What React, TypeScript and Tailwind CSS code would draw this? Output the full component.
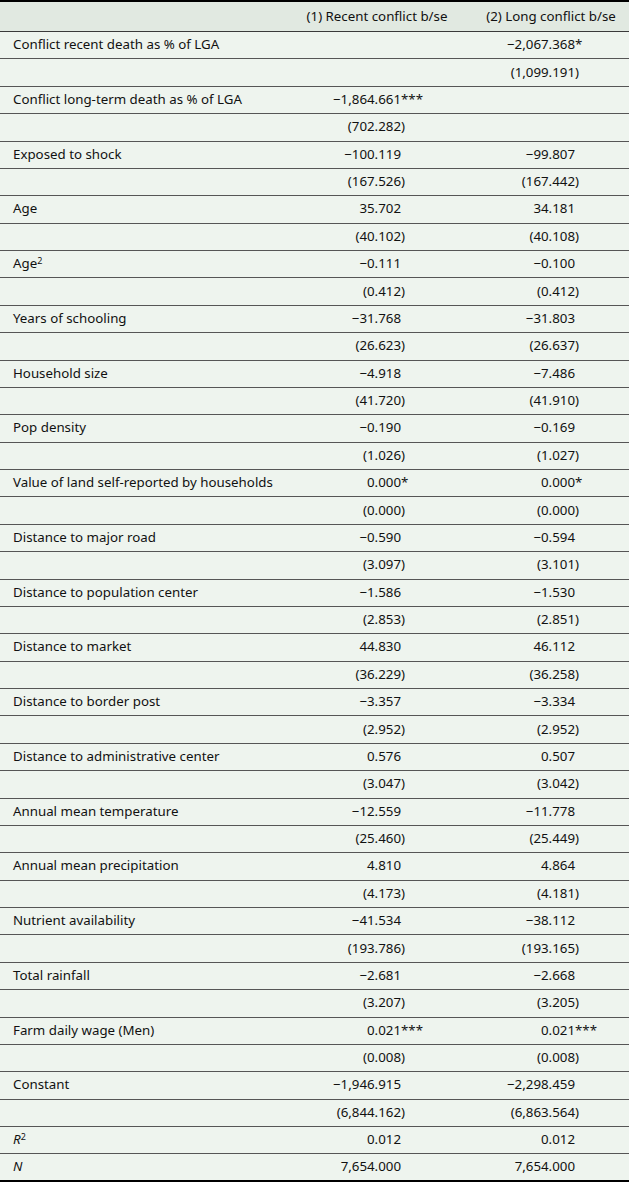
import React from "react";

type Row = { label?: React.ReactNode; a: string; b: string };

const vars: [React.ReactNode, string, string, string, string][] = [
  ["Conflict recent death as % of LGA", "", "−2,067.368*", "", "(1,099.191)"],
  ["Conflict long-term death as % of LGA", "−1,864.661***", "", "(702.282)", ""],
  ["Exposed to shock", "−100.119", "−99.807", "(167.526)", "(167.442)"],
  ["Age", "35.702", "34.181", "(40.102)", "(40.108)"],
  [
    <>
      Age<sup className="text-[9px]">2</sup>
    </>,
    "−0.111",
    "−0.100",
    "(0.412)",
    "(0.412)",
  ],
  ["Years of schooling", "−31.768", "−31.803", "(26.623)", "(26.637)"],
  ["Household size", "−4.918", "−7.486", "(41.720)", "(41.910)"],
  ["Pop density", "−0.190", "−0.169", "(1.026)", "(1.027)"],
  ["Value of land self-reported by households", "0.000*", "0.000*", "(0.000)", "(0.000)"],
  ["Distance to major road", "−0.590", "−0.594", "(3.097)", "(3.101)"],
  ["Distance to population center", "−1.586", "−1.530", "(2.853)", "(2.851)"],
  ["Distance to market", "44.830", "46.112", "(36.229)", "(36.258)"],
  ["Distance to border post", "−3.357", "−3.334", "(2.952)", "(2.952)"],
  ["Distance to administrative center", "0.576", "0.507", "(3.047)", "(3.042)"],
  ["Annual mean temperature", "−12.559", "−11.778", "(25.460)", "(25.449)"],
  ["Annual mean precipitation", "4.810", "4.864", "(4.173)", "(4.181)"],
  ["Nutrient availability", "−41.534", "−38.112", "(193.786)", "(193.165)"],
  ["Total rainfall", "−2.681", "−2.668", "(3.207)", "(3.205)"],
  ["Farm daily wage (Men)", "0.021***", "0.021***", "(0.008)", "(0.008)"],
  ["Constant", "−1,946.915", "−2,298.459", "(6,844.162)", "(6,863.564)"],
];

const rows: Row[] = [];
vars.forEach(([label, a, b, sa, sb]) => {
  rows.push({ label, a, b });
  rows.push({ a: sa, b: sb });
});
rows.push({
  label: (
    <>
      <i>R</i>
      <sup className="text-[9px]">2</sup>
    </>
  ),
  a: "0.012",
  b: "0.012",
});
rows.push({ label: <i>N</i>, a: "7,654.000", b: "7,654.000" });

function split(v: string): [string, string] {
  const m = v.match(/^(.*?)([)*]*)$/);
  if (!m) return [v, ""];
  return [m[1], m[2]];
}

function Val({ v, w }: { v: string; w: string }) {
  const [main, suf] = split(v);
  return (
    <div className="flex items-center h-full">
      <div className={`${w} text-right whitespace-nowrap`}>{main}</div>
      <div className="w-[24px] text-left whitespace-nowrap">{suf}</div>
    </div>
  );
}

export default function App() {
  return (
    <div
      className="w-[629px] bg-[#eef4ee] text-[#111] text-[13.3px]"
      style={{ fontFamily: '"Noto Sans", sans-serif' }}
    >
      <div className="grid grid-cols-[281px_192px_156px] h-[32px] bg-[#e1e9e1] border-t-2 border-b border-[#3a3a3a] border-t-black items-center">
        <div />
        <div className="text-center">(1) Recent conflict b/se</div>
        <div className="text-center">(2) Long conflict b/se</div>
      </div>
      {rows.map((r, i) => (
        <div
          key={i}
          className={`grid grid-cols-[281px_192px_156px] h-[27.38px] items-center border-b ${
            i === rows.length - 1 ? "border-b-2 border-black" : "border-[#555]"
          }`}
        >
          <div className="pl-[13px] whitespace-nowrap">{r.label}</div>
          <Val v={r.a} w="w-[120px]" />
          <Val v={r.b} w="w-[102px]" />
        </div>
      ))}
    </div>
  );
}
